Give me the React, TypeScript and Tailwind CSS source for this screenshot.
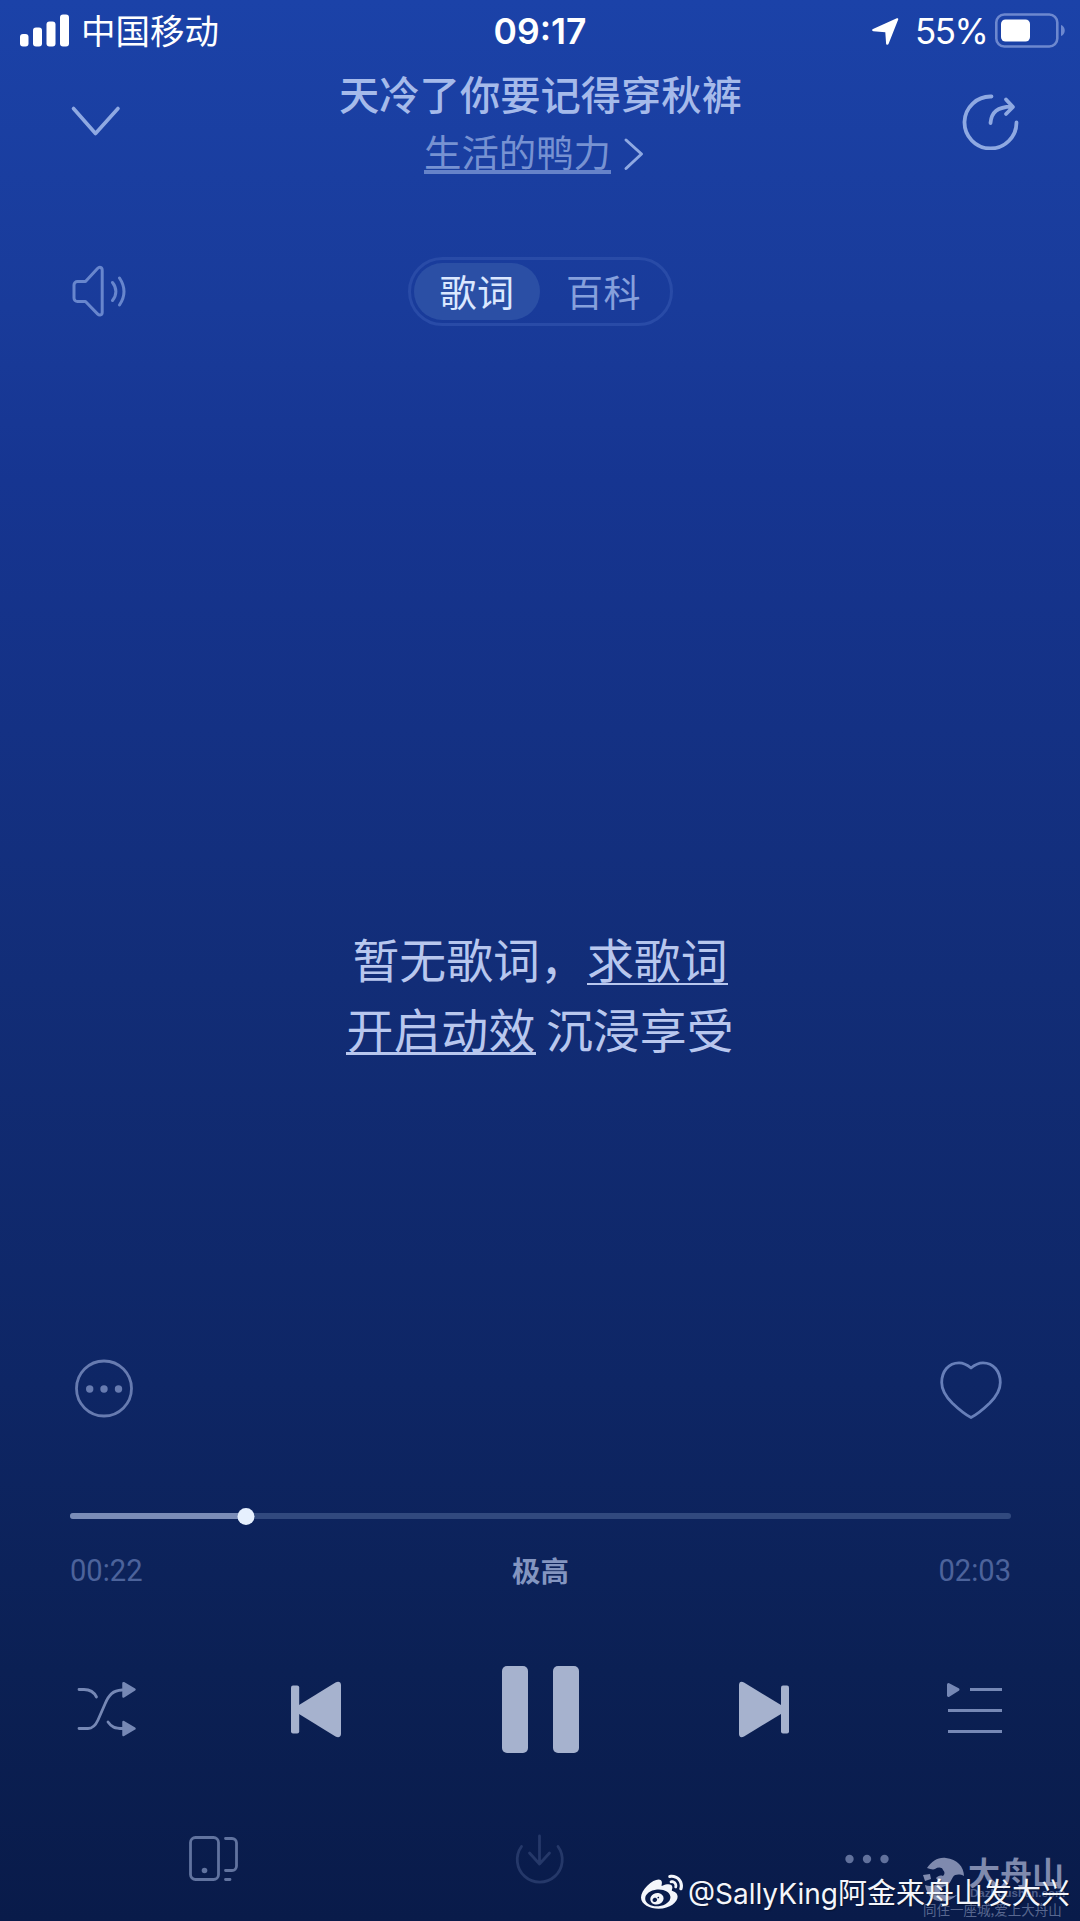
import { FaWeibo } from 'react-icons/fa';

function StatusBar() {
  return (
    <div className="flex h-[62px] shrink-0 items-start text-white">
      <div className="flex w-[360px] items-start pl-5">
        <svg className="mt-[14px] h-[33px] w-[50px]" viewBox="0 0 50 33" fill="currentColor">
          <rect x="0" y="20" width="8.5" height="12.5" rx="3" />
          <rect x="13" y="13.5" width="9" height="19" rx="3" />
          <rect x="26.5" y="7.5" width="9" height="25" rx="3" />
          <rect x="40" y="0.5" width="9" height="32" rx="3" />
        </svg>
        <span className="ml-[11px] mt-[9px] text-[34.5px] leading-[40px]">中国移动</span>
      </div>
      <div className="mt-[12px] w-[360px] text-center font-['Inter'] text-[35.5px] font-semibold leading-[40px]">
        09:17
      </div>
      <div className="flex w-[360px] items-start">
        <svg className="ml-[151px] mt-[17px] h-[29px] w-[29px]" viewBox="0 0 29 29" fill="currentColor">
          <path d="M25.8 1.3c1-.4 1.8.3 1.4 1.3L17.5 27c-.5 1.2-2.2 1-2.4-.3L14.3 15.2 2.3 14.2C.8 14 .7 12.6 2 12z" />
        </svg>
        <span className="ml-[15px] mt-[11px] w-[74px] font-['Inter'] text-[35px] leading-[40px] tracking-[-1.5px]">55%</span>
        <svg className="ml-[6px] mt-[13px] h-[35px] w-[72px]" viewBox="0 0 72 35">
          <rect x="1.3" y="1.5" width="61" height="32" rx="8" fill="none" stroke="#6d88cf" strokeWidth="2.6" />
          <rect x="6" y="6.5" width="29" height="22" rx="4.5" fill="white" />
          <path d="M66 12c5 1.5 5 9.5 0 11z" fill="#6d88cf" />
        </svg>
      </div>
    </div>
  );
}

function Header() {
  return (
    <header className="flex h-[140px] shrink-0 pl-[60px]">
      <svg className="mt-[37px] h-[44px] w-[72px]" viewBox="0 0 72 44" fill="none" stroke="#8fa9e2" strokeWidth="3.6" strokeLinecap="round" strokeLinejoin="round">
        <path d="M13.5 9.5 35.5 34.5 58 9.5" />
      </svg>
      <div className="ml-[207px] flex w-[403px] flex-col">
        <h1 className="mt-[6px] whitespace-nowrap text-[40.3px] font-medium leading-[50px] text-[#a5baea]">天冷了你要记得穿秋裤</h1>
        <div className="mt-[9px] flex items-start pl-[85px] text-[37.4px] leading-[48px] text-[#7792d2]">
          <span className="h-[47px] border-b-4 border-[#6683c9]">生活的鸭力</span>
          <svg className="ml-[12px] mt-[10px] h-[34px] w-[22px]" viewBox="0 0 22 34" fill="none" stroke="#8fa9e2" strokeWidth="3" strokeLinecap="round" strokeLinejoin="round">
            <path d="M3 3 18.5 17 3 31.5" />
          </svg>
        </div>
      </div>
      <svg className="ml-[218px] mt-[28px] h-[60px] w-[60px]" viewBox="0 0 60 60" fill="none" stroke="#8fa9e2" strokeWidth="3.8" strokeLinecap="round" strokeLinejoin="round">
        <path d="M31.5 6.500A26 26 0 1 0 56.5 32.5" />
        <path d="M30.500 33C31.500 22 37.500 17 51.500 16.500M46 9.500 53 17 46 24" />
      </svg>
    </header>
  );
}

function TabRow() {
  return (
    <div className="flex h-[180px] shrink-0 items-start pl-[67px] pt-[55px]">
      <svg className="mt-[5px] h-[58px] w-[62px]" viewBox="0 0 62 58" fill="none" stroke="#6886cd" strokeWidth="3" strokeLinecap="round" strokeLinejoin="round">
        <path d="M10.500 19.500H18.500L30.500 6.500c2-2 4.700-1.300 4.700 1.700v42c0 3-2.700 3.700-4.700 1.700L18.500 39.500H10.500a3.500 3.500 0 0 1-3.500-3.500V23a3.500 3.500 0 0 1 3.500-3.500z" />
        <path d="M45.500 20.500c4.500 5.500 4.500 12.500 0 18M52.500 16c6 9 6 18 0 27" />
      </svg>
      <div className="ml-[279px] flex h-[69px] w-[265px] items-center rounded-full border-[3px] border-[#294ba7] pl-[3px] text-[37px] leading-[57px]">
        <div className="h-[57px] w-[126px] rounded-full bg-[#2b4fa5] text-center tracking-[0.500px] text-[#dbe8ff]">歌词</div>
        <div className="ml-[26px] h-[57px] tracking-[0.500px] text-[#86a0dc]">百科</div>
      </div>
    </div>
  );
}

function Lyrics() {
  return (
    <div className="h-[970px] shrink-0 pt-[543px] text-[46.9px] text-[#b8c7ee]">
      <p className="flex h-[70px] justify-center leading-[66px]">
        暂无歌词，<span className="h-[60px] border-b-2 border-[#b8c7ee]">求歌词</span>
      </p>
      <p className="flex h-[70px] justify-center leading-[66px]">
        <span className="mr-[10px] h-[60px] border-b-[3px] border-[#b8c7ee] tracking-[0.500px]">开启动效</span>
        沉浸享受
      </p>
    </div>
  );
}

function Progress() {
  const percent = (175.5 / 941) * 100;
  return (
    <div className="pl-[70px] pr-[69px]">
      <div className="relative h-1.5 rounded-full bg-[#31497e]">
        <div className="h-1.5 rounded-full bg-[#7b8db8]" style={{ width: `${percent}%` }} />
        <div
          className="absolute top-[-5.500px] h-[17px] w-[17px] -translate-x-1/2 rounded-full bg-[#e6f0fe]"
          style={{ left: `${percent}%` }}
        />
      </div>
      <div className="mt-[31px] flex h-10 items-center justify-between font-['Roboto'] text-[32px] text-[#4c639b]">
        <span className="w-[120px] origin-left scale-x-[0.91]">00:22</span>
        <span className="font-['Noto_Sans_CJK_SC'] text-[28.5px] font-bold text-[#8395c0]">极高</span>
        <span className="w-[120px] origin-right scale-x-[0.91] text-right">02:03</span>
      </div>
    </div>
  );
}

function Controls() {
  return (
    <div className="mt-[69px] flex h-[100px] items-center pl-[71px]">
      <svg className="h-[64px] w-[70px]" viewBox="0 0 70 64" fill="none" stroke="#7688b5" strokeWidth="2.8" strokeLinecap="round">
        <path d="M8 12.500h5c6 0 10 2.500 12.500 7.500M8 51.500h9c5 0 7.500-3 10-8.500l7-16c4-9.500 8-13.500 17-14M37 45c3.500 5 6.500 6.500 15 6.500" />
        <path d="M52.500 6.200 63.500 12.500 52.500 19.500zM52.500 45 63.500 51.500 52.500 58z" fill="#7688b5" strokeWidth="2.5" strokeLinejoin="round" />
      </svg>
      <svg className="ml-[148px] h-[60px] w-[60px]" viewBox="0 0 60 60" fill="#a6b2ce">
        <rect x="2" y="6.5" width="8.2" height="48" rx="2" />
        <path d="M10 26 46.500 3.500c3-1.700 5.500-.5 5.500 2.500v49c0 3-2.500 4-5.500 2.500L10 35z" />
      </svg>
      <div className="ml-[153px] flex h-[87px] gap-[25px]">
        <div className="w-[26px] rounded-[5px] bg-[#a6b2ce]" />
        <div className="w-[26px] rounded-[5px] bg-[#a6b2ce]" />
      </div>
      <svg className="ml-[152px] h-[60px] w-[60px]" viewBox="0 0 60 60" fill="#a6b2ce">
        <path d="M50 26 13 3.500C10 1.800 8 3 8 6v49c0 3 2 4 5 2.500L50 35z" />
        <rect x="50" y="6.5" width="8" height="48" rx="2" />
      </svg>
      <svg className="ml-[153px] h-[60px] w-[62px]" viewBox="0 0 62 60" fill="none" stroke="#7688b5" strokeWidth="3">
        <path d="M4.500 5.500 14 10.500 4.500 16.500z" fill="#7688b5" strokeLinejoin="round" />
        <path d="M26 10.500h32M4 31.500h54M4 52.500h54" />
      </svg>
    </div>
  );
}

function BottomBar() {
  return (
    <div className="mt-[68px] flex h-[64px] items-center pl-[185px]">
      <svg className="h-[52px] w-[56px]" viewBox="0 0 56 52" fill="none" stroke="#61739f" strokeWidth="2.8" strokeLinecap="round" strokeLinejoin="round">
        <rect x="5.5" y="4.5" width="28" height="42" rx="5" />
        <path d="M40.500 5.500h6.500a4.500 4.500 0 0 1 4.500 4.500v23a4.500 4.500 0 0 1-4.500 4.500h-6.500M40.500 46.500h4.500" />
        <circle cx="19.5" cy="37.5" r="2.8" fill="#61739f" stroke="none" />
      </svg>
      <svg className="ml-[272px] h-[52px] w-[54px]" viewBox="0 0 54 52" fill="none" stroke="#253869" strokeWidth="2.8" strokeLinecap="round" strokeLinejoin="round">
        <path d="M8.500 13.500a22.500 22.500 0 1 0 36.500 0M26.500 3v27M16.500 20 26.500 31 36.500 20" />
      </svg>
      <svg className="ml-[277px] h-[10px] w-[46px]" viewBox="0 0 46 10" fill="#61719c">
        <circle cx="5.5" cy="5" r="4.2" />
        <circle cx="23" cy="5" r="4.2" />
        <circle cx="40.5" cy="5" r="4.2" />
      </svg>
    </div>
  );
}

function Watermarks() {
  return (
    <>
      <div className="absolute bottom-0 right-[16px] h-[66px] w-[142px] text-[#7f8aae]">
        <svg className="absolute left-[1px] top-[2px] h-[46px] w-[42px]" viewBox="0 0 42 46" fill="currentColor">
          {/* round emblem with a gull-shaped cutout */}
          <path d="M4 11C9 4 15 0 23 1c11 1 18 9 18 18-4-2-9-2-11 1-3 5-3 7-8 9-6 2-7 5-2 8 5 3 10 3 14 1-7 7-17 8-24 4C6 39 3 34 2 28c5 2 11 1 14-3l-3-4c2-2 4-3 7-2 2-2 2-4 0-6-1-3-5-3-8-1-2 1-5 0-8-1z" />
          <path d="M0 18l7-1 1 5-6 2z" />
        </svg>
        <div className="absolute left-[46px] top-[-2px] whitespace-nowrap text-[32px] font-bold leading-[36px]">大舟山</div>
        <div className="absolute left-[48px] top-[31px] font-['Liberation_Sans'] text-[11.5px] font-bold leading-[14px] text-[#4f5f8c]">Dazhoushan.com</div>
        <div className="absolute left-[1px] top-[46px] whitespace-nowrap text-[13.5px] leading-[16px] text-[#58678f]">同住一座城,爱上大舟山</div>
      </div>
      <div className="absolute bottom-[5px] right-[10px] flex items-center text-[#f4f6fb]">
        <FaWeibo className="h-[42px] w-[42px]" />
        <span className="ml-[5px] whitespace-nowrap text-[29px] leading-[44px] [text-shadow:1px_1px_1px_rgba(0,0,0,0.35)]">
          <span className="font-['Inter'] text-[28px]">@SallyKing</span>阿金来舟山发大兴
        </span>
      </div>
    </>
  );
}

export default function App() {
  return (
    <div
      lang="zh-CN"
      className="relative flex h-[1921px] w-[1080px] flex-col overflow-hidden bg-[linear-gradient(180deg,#1b42a8_0%,#193b9a_16%,#163591_25%,#122d77_51%,#0e2665_72%,#0b2054_87%,#091b4a_100%)] font-['Noto_Sans_CJK_SC',sans-serif]"
    >
      <StatusBar />
      <Header />
      <TabRow />
      <Lyrics />
      <div className="flex h-[161px] shrink-0 items-start justify-between pl-[74px] pr-[77px] pt-[6px]">
        <svg className="h-[60px] w-[60px]" viewBox="0 0 60 60" fill="none" stroke="#677bb0" strokeWidth="2.8">
          <circle cx="30" cy="30.5" r="27.5" />
          <g fill="#677bb0" stroke="none">
            <circle cx="15.7" cy="31" r="3.7" />
            <circle cx="30" cy="31" r="3.7" />
            <circle cx="44.5" cy="31" r="3.7" />
          </g>
        </svg>
        <svg className="h-[62px] w-[64px]" viewBox="0 0 64 62" fill="none" stroke="#677fb9" strokeWidth="2.8" strokeLinejoin="round">
          <path d="M32 10C28 6.500 24 4.800 20 4.800 9.500 4.800 2.700 13.500 2.700 24.500c0 8 4.500 14.500 10.500 20.500C20 51.500 26 56.500 32 59.500c6-3 12-8 18.800-14.500 6-6 10.500-12.500 10.500-20.500C61.300 13.500 54.500 4.800 44 4.800 40 4.800 36 6.500 32 10z" />
        </svg>
      </div>
      <Progress />
      <Controls />
      <BottomBar />
      <Watermarks />
    </div>
  );
}
